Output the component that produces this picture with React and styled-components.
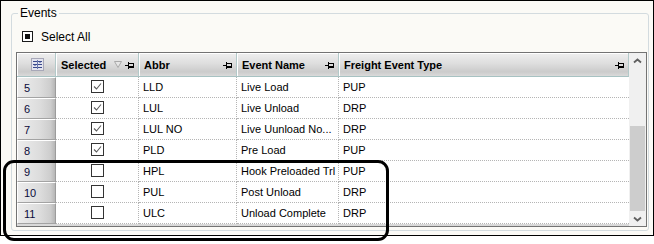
import React from 'react';
import styled, { createGlobalStyle } from 'styled-components';

const GlobalStyle = createGlobalStyle`
  html, body {
    margin: 0;
    padding: 0;
    background: #fff;
  }
  body {
    font-family: "Liberation Sans", Arial, sans-serif;
    font-size: 11px;
    color: #000;
  }
  * {
    box-sizing: border-box;
  }
`;

const Page = styled.div`
  position: relative;
  width: 654px;
  height: 244px;
`;

const Window = styled.div`
  width: 654px;
  height: 236px;
  border: 1px solid #000;
  background: #fbfaf6;
  padding: 5px 4px 0 10px;
`;

const GroupBox = styled.fieldset`
  margin: 0;
  padding: 0 1px 0 4px;
  height: 225px;
  min-width: 0;
  border: 1px solid #d3dbdf;
  border-radius: 3px;
`;

const Legend = styled.legend`
  margin-left: 2px;
  padding: 0 2px;
  line-height: 14px;
  font-size: 12px;
`;

const SelectRow = styled.div`
  display: flex;
  align-items: center;
  gap: 8px;
  height: 13px;
  margin: 10px 0 9px 6px;
  font-size: 12px;
`;

const Indeterminate = styled.span`
  width: 11px;
  height: 11px;
  border: 1px solid #1a1a1a;
  padding: 2px;
  background: #fff;

  &::after {
    content: '';
    display: block;
    width: 5px;
    height: 5px;
    background: #111;
  }
`;

const Grid = styled.div`
  display: flex;
  height: 175px;
  border: 1px solid #737373;
  background: #fff;
`;

const Table = styled.div`
  display: grid;
  grid-template-columns: 39px 83px 98px 102px 290px;
  grid-template-rows: 24px;
  grid-auto-rows: 21px;
  width: 612px;
  border-bottom: 2px solid #d9d9d9;
  align-content: start;
`;

const HeaderCell = styled.div`
  display: flex;
  align-items: center;
  justify-content: ${(p) => (p.center ? 'center' : 'flex-start')};
  gap: 3px;
  padding: 0 3px 0 5px;
  font-weight: bold;
  background: linear-gradient(#efefef 0%, #dedede 45%, #cbcbcb 82%, #dadada 100%);
  border-right: 1px solid #b3c9c9;
  border-bottom: 1px solid #a7c2c2;
  box-shadow: inset 1px 1px 0 #fff;
`;

const HeaderText = styled.span`
  white-space: nowrap;
`;

const Spacer = styled.span`
  flex: 1;
`;

const RowHead = styled.div`
  display: flex;
  align-items: center;
  padding-left: 6px;
  color: #0b0b3a;
  background: linear-gradient(to right, #ececec 0%, #dcdcdc 60%, #cdcdcd 88%, #b6b6b6 100%);
  border-top: 1px solid #fff;
  border-left: 1px solid #fff;
  border-bottom: 1px solid #a3a3a3;
  border-right: 1px solid #9c9c9c;
`;

const Cell = styled.div`
  display: flex;
  align-items: center;
  justify-content: ${(p) => (p.center ? 'center' : 'flex-start')};
  padding: 0 0 1px 4px;
  overflow: hidden;
  white-space: nowrap;
  border-right: ${(p) => (p.last ? 'none' : '1px dotted #b5b5b5')};
  border-bottom: 1px dotted #b5b5b5;
`;

const CheckBox = styled.span`
  display: flex;
  align-items: center;
  justify-content: center;
  width: 13px;
  height: 13px;
  margin-left: -4px;
  border: 1px solid #333;
  background: #fff;
`;

const ScrollBar = styled.div`
  display: flex;
  flex-direction: column;
  width: 17px;
  background: #f0f0f0;
`;

const ScrollButton = styled.div`
  display: flex;
  align-items: center;
  justify-content: center;
  height: ${(p) => p.h}px;
`;

const Track = styled.div`
  flex: 1;
  display: flex;
  flex-direction: column;
  justify-content: flex-end;
  padding: 0 1px;
`;

const Thumb = styled.div`
  height: 85px;
  background: #cdcdcd;
`;

const Callout = styled.div`
  position: absolute;
  left: 3px;
  top: 160px;
  width: 386px;
  height: 81px;
  border: 3px solid #000;
  border-radius: 11px;
  pointer-events: none;
`;

function PinIcon() {
  return (
    <svg width="10" height="8" viewBox="0 0 10 8" shapeRendering="crispEdges">
      <rect x="0" y="4" width="3" height="1" fill="#000" />
      <rect x="3" y="1" width="1" height="7" fill="#000" />
      <rect x="4" y="2" width="5" height="1" fill="#000" />
      <rect x="8" y="2" width="1" height="4" fill="#000" />
      <rect x="4" y="5" width="5" height="2" fill="#000" />
    </svg>
  );
}

function FilterIcon() {
  return (
    <svg width="8" height="7" viewBox="0 0 8 7">
      <path d="M0.5 0.5H7.5L4 6.5Z" fill="#e6e6e6" stroke="#a9a9a9" />
    </svg>
  );
}

function ChooserIcon() {
  return (
    <svg width="13" height="13" viewBox="0 0 13 13" shapeRendering="crispEdges">
      <rect x="0.5" y="0.5" width="12" height="12" fill="#e3e4ee" stroke="#a8a8b8" />
      <rect x="2" y="3" width="9" height="1" fill="#3b4a8c" />
      <rect x="2" y="6" width="9" height="1" fill="#3b4a8c" />
      <rect x="2" y="9" width="9" height="1" fill="#3b4a8c" />
      <rect x="6" y="2" width="1" height="9" fill="#6a78b0" />
      <rect x="8" y="4" width="2" height="1" fill="#8c96c4" />
      <rect x="3" y="7" width="2" height="1" fill="#8c96c4" />
    </svg>
  );
}

function CheckMark() {
  return (
    <svg width="11" height="11" viewBox="0 0 11 11">
      <path d="M2 5.5L4.5 8L9 2.5" fill="none" stroke="#5a5a5a" strokeWidth="1.1" />
    </svg>
  );
}

function Chevron({ down }) {
  return (
    <svg width="9" height="6" viewBox="0 0 9 6">
      <path
        d={down ? 'M1 1.5L4.5 4.5L8 1.5' : 'M1 4.5L4.5 1.5L8 4.5'}
        fill="none"
        stroke="#5f5f5f"
        strokeWidth="1.8"
      />
    </svg>
  );
}

const rows = [
  { n: 5, sel: true, abbr: 'LLD', name: 'Live Load', type: 'PUP' },
  { n: 6, sel: true, abbr: 'LUL', name: 'Live Unload', type: 'DRP' },
  { n: 7, sel: true, abbr: 'LUL NO', name: 'Live Uunload No...', type: 'DRP' },
  { n: 8, sel: true, abbr: 'PLD', name: 'Pre Load', type: 'PUP' },
  { n: 9, sel: false, abbr: 'HPL', name: 'Hook Preloaded Trl', type: 'PUP' },
  { n: 10, sel: false, abbr: 'PUL', name: 'Post Unload', type: 'DRP' },
  { n: 11, sel: false, abbr: 'ULC', name: 'Unload Complete', type: 'DRP' },
];

export default function App() {
  return (
    <Page>
      <GlobalStyle />
      <Window>
        <GroupBox>
          <Legend>Events</Legend>
          <SelectRow>
            <Indeterminate />
            <span>Select All</span>
          </SelectRow>
          <Grid>
            <Table>
              <HeaderCell center>
                <ChooserIcon />
              </HeaderCell>
              <HeaderCell>
                <HeaderText>Selected</HeaderText>
                <Spacer />
                <FilterIcon />
                <PinIcon />
              </HeaderCell>
              <HeaderCell>
                <HeaderText>Abbr</HeaderText>
                <Spacer />
                <PinIcon />
              </HeaderCell>
              <HeaderCell>
                <HeaderText>Event Name</HeaderText>
                <Spacer />
                <PinIcon />
              </HeaderCell>
              <HeaderCell>
                <HeaderText>Freight Event Type</HeaderText>
                <Spacer />
                <PinIcon />
              </HeaderCell>

              {rows.map((r) => (
                <React.Fragment key={r.n}>
                  <RowHead>{r.n}</RowHead>
                  <Cell center>
                    <CheckBox>{r.sel && <CheckMark />}</CheckBox>
                  </Cell>
                  <Cell>{r.abbr}</Cell>
                  <Cell>{r.name}</Cell>
                  <Cell last>{r.type}</Cell>
                </React.Fragment>
              ))}
            </Table>
            <ScrollBar>
              <ScrollButton h={15}>
                <Chevron />
              </ScrollButton>
              <Track>
                <Thumb />
              </Track>
              <ScrollButton h={15}>
                <Chevron down />
              </ScrollButton>
            </ScrollBar>
          </Grid>
        </GroupBox>
      </Window>
      <Callout />
    </Page>
  );
}
